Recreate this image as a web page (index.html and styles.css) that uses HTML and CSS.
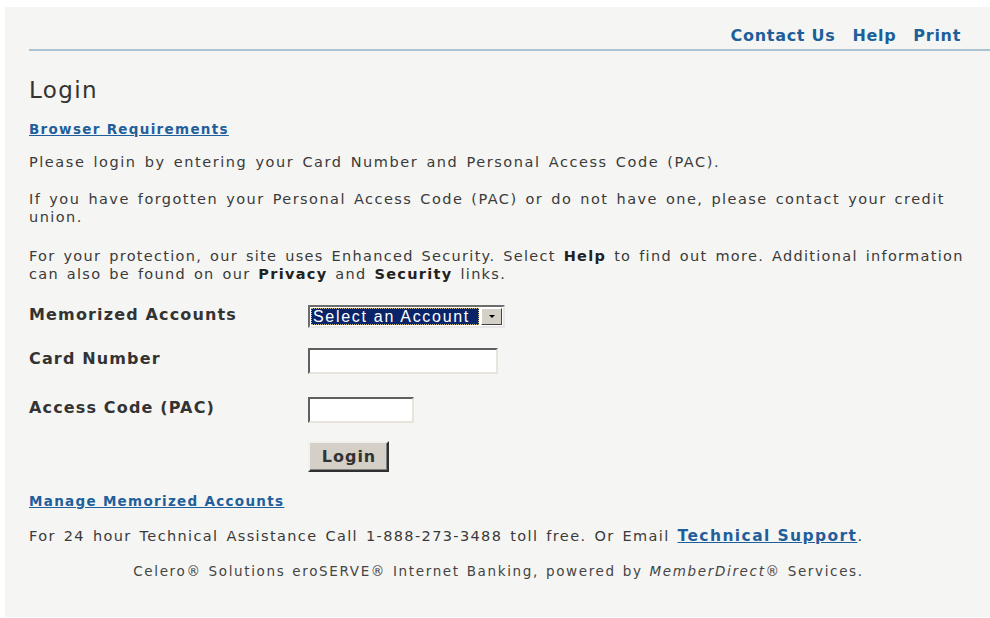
FILE: index.html
```html
<!DOCTYPE html>
<html lang="en">
<head>
<meta charset="utf-8">
<title>Login</title>
<link rel="stylesheet" href="styles.css">
</head>
<body>
<div class="page">
  <div class="topbar">
    <nav class="toplinks">
      <a href="#">Contact Us</a>
      <a href="#">Help</a>
      <a href="#">Print</a>
    </nav>
  </div>
  <main class="content">
    <h1 class="title">Login</h1>
    <p class="small-link browser"><a href="#">Browser Requirements</a></p>
    <p class="txt first">Please login by entering your Card Number and Personal Access Code (PAC).</p>
    <p class="txt">If you have forgotten your Personal Access Code (PAC) or do not have one, please contact your credit<br>union.</p>
    <p class="txt protect">For your protection, our site uses Enhanced Security. Select <b>Help</b> to find out more. Additional information<br>can also be found on our <b>Privacy</b> and <b>Security</b> links.</p>

    <form class="login-form">
      <div class="row row-select">
        <span class="label">Memorized Accounts</span>
        <span class="select">
          <span class="select-value">Select an Account</span>
          <span class="select-btn"><span class="arrow"></span></span>
        </span>
      </div>
      <div class="row row-card">
        <label class="label" for="card">Card Number</label>
        <input class="field field-card" id="card" type="text">
      </div>
      <div class="row row-pac">
        <label class="label" for="pac">Access Code (PAC)</label>
        <input class="field field-pac" id="pac" type="password">
      </div>
      <div class="row row-btn">
        <span class="label"></span>
        <button class="btn" type="button">Login</button>
      </div>
    </form>

    <p class="small-link manage"><a href="#">Manage Memorized Accounts</a></p>
    <p class="txt support">For 24 hour Technical Assistance Call 1-888-273-3488 toll free. Or Email <a class="support-link" href="#">Technical Support</a>.</p>
    <p class="footer">Celero&reg; Solutions eroSERVE&reg; Internet Banking, powered by <i>MemberDirect</i>&reg; Services.</p>
  </main>
</div>
</body>
</html>
```

FILE: styles.css
```css
html, body {
  margin: 0;
  padding: 0;
  background: #ffffff;
}

body {
  font-family: "DejaVu Sans", Verdana, sans-serif;
  color: #333333;
}

.page {
  margin: 7px 0 0 5px;
  height: 610px;
  background: #f5f5f3;
  overflow: hidden;
}

/* top navigation with the blue rule underneath */
.topbar {
  margin-left: 24px;
  height: 42px;
  border-bottom: 2px solid #a9c3d3;
  display: flex;
  justify-content: flex-end;
  align-items: flex-end;
}

.toplinks {
  display: flex;
  gap: 17px;
  padding-right: 29px;
  padding-bottom: 4px;
}

.toplinks a {
  font-weight: bold;
  font-size: 16px;
  letter-spacing: 0.7px;
  color: #1d5f99;
  text-decoration: none;
}

.content {
  padding: 0 0 0 24px;
}

.title {
  margin: 26px 0 0;
  font-size: 23px;
  font-weight: normal;
  letter-spacing: 1.4px;
  line-height: 26px;
  color: #333333;
}

.small-link {
  font-size: 13.5px;
  line-height: 14px;
  letter-spacing: 1.3px;
}

.small-link a {
  color: #1f5f9c;
  font-weight: bold;
  text-decoration: underline;
}

.browser {
  margin: 19px 0 0;
}

.txt {
  margin: 20px 0 0;
  font-size: 14.5px;
  line-height: 18px;
  letter-spacing: 1.45px;
  word-spacing: 2px;
  white-space: nowrap;
  color: #3a3a3a;
}

.txt.first {
  margin-top: 17px;
  letter-spacing: 1.55px;
}

.txt + .txt {
  margin-top: 19px;
}

.txt.protect {
  margin-top: 21px;
  letter-spacing: 1.3px;
}

.txt b {
  color: #222222;
}

/* login form rows */
.login-form {
  margin-top: 22px;
}

.row {
  display: flex;
  align-items: center;
}

.label {
  width: 279px;
  flex: none;
  padding-bottom: 5px;
  font-weight: bold;
  font-size: 16px;
  letter-spacing: 1.15px;
  color: #333333;
}

.row-select { height: 23px; }
.row-card { height: 26px; margin-top: 20px; }
.row-pac { height: 26px; margin-top: 23px; }
.row-btn { height: 31px; margin-top: 18px; }

.select {
  display: flex;
  width: 197px;
  height: 23px;
  box-sizing: border-box;
  border: 2px solid;
  border-color: #6c6c6c #e6e6e6 #e6e6e6 #6c6c6c;
  background: #ffffff;
  padding: 1px;
}

.select-value {
  flex: 1;
  background: #0a246a;
  color: #ffffff;
  font-family: "Liberation Sans", Arial, sans-serif;
  font-size: 16px;
  letter-spacing: 1.7px;
  line-height: 17px;
  padding-left: 2px;
  white-space: nowrap;
  overflow: hidden;
  outline: 1px dotted #c8b873;
  outline-offset: -1px;
}

.select-btn {
  width: 21px;
  margin-left: 2px;
  background: #d4d0c8;
  border: 1px solid;
  border-color: #ffffff #404040 #404040 #ffffff;
  box-sizing: border-box;
  display: flex;
  align-items: center;
  justify-content: center;
}

.arrow {
  width: 0;
  height: 0;
  border-left: 3px solid transparent;
  border-right: 3px solid transparent;
  border-top: 3px solid #000000;
}

.field {
  height: 26px;
  box-sizing: border-box;
  border: 2px solid;
  border-color: #5f5f5f #e8e4dc #e8e4dc #5f5f5f;
  background: #ffffff;
  padding: 0 3px;
  margin: 0;
}

.field-card { width: 190px; }
.field-pac { width: 106px; }

.btn {
  width: 81px;
  height: 31px;
  box-sizing: border-box;
  margin: 0;
  padding: 0 0 0 1px;
  background: #d4d0c8;
  border: 2px solid;
  border-color: #f2f0ec #303030 #303030 #f2f0ec;
  box-shadow: inset -1px -1px 0 #808080;
  font-family: "DejaVu Sans", Verdana, sans-serif;
  font-weight: bold;
  font-size: 16px;
  letter-spacing: 1px;
  color: #333333;
}

.manage {
  margin: 22px 0 0;
}

.txt.support {
  margin-top: 19px;
  letter-spacing: 1.37px;
}

.support-link {
  color: #1f5f9c;
  font-weight: bold;
  font-size: 15.5px;
  letter-spacing: 1.4px;
  word-spacing: 0;
  text-decoration: underline;
}

.footer {
  margin: 18px 22px 0 0;
  text-align: center;
  font-size: 13.5px;
  line-height: 16px;
  letter-spacing: 1.65px;
  word-spacing: 1px;
  color: #444444;
}
```
